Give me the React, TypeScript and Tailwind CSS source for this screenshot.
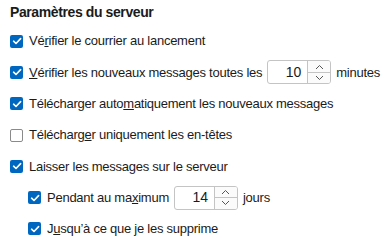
import type { ReactNode } from 'react'

function Check({ checked }: { checked: boolean }) {
  if (!checked) {
    return (
      <span className="w-[13px] h-[13px] shrink-0 rounded-[2px] border border-[#8a8a8a] bg-white box-border" />
    )
  }
  return (
    <span className="w-[13px] h-[13px] shrink-0 rounded-[2px] bg-[#0067c0] flex items-center justify-center">
      <svg width="10" height="10" viewBox="0 0 10 10" fill="none">
        <path d="M1.6 5.2 L4 7.5 L8.6 2.6" stroke="white" strokeWidth="1.6" strokeLinecap="round" strokeLinejoin="round" />
      </svg>
    </span>
  )
}

function Spinner({ value }: { value: number }) {
  return (
    <span className="flex h-[24px] w-[64px] rounded-[3px] border border-[#c4c4c4] bg-white box-border overflow-hidden">
      <span className="flex-1 flex items-center justify-end pr-[6px] text-[14px] tracking-normal">{value}</span>
      <span className="w-[23px] flex flex-col border-l border-[#c4c4c4] bg-[#fbfbfb]">
        <span className="flex-1 flex items-center justify-center border-b border-[#c4c4c4]">
          <svg width="9" height="6" viewBox="0 0 9 6" fill="none">
            <path d="M1 5 L4.5 1.5 L8 5" stroke="#555" strokeWidth="1" />
          </svg>
        </span>
        <span className="flex-1 flex items-center justify-center">
          <svg width="9" height="6" viewBox="0 0 9 6" fill="none">
            <path d="M1 1 L4.5 4.5 L8 1" stroke="#555" strokeWidth="1" />
          </svg>
        </span>
      </span>
    </span>
  )
}

function Row({ checked, indent, children }: { checked: boolean; indent?: boolean; children: ReactNode }) {
  return (
    <div className={`h-[31.3px] flex items-center gap-[6px] ${indent ? 'pl-[28px]' : 'pl-[10px]'}`}>
      <Check checked={checked} />
      <div className="flex items-center gap-[5px] whitespace-nowrap">{children}</div>
    </div>
  )
}

export default function App() {
  return (
    <div
      className="w-[386px] h-[240px] bg-white text-[#1b1b1b] overflow-hidden"
      style={{ fontFamily: '"Liberation Sans", Arial, sans-serif' }}
    >
      <div className="h-[25.5px] pl-[10px] flex items-center text-[14px] font-bold tracking-[-0.4px]">
        Paramètres du serveur
      </div>
      <div className="text-[13px] tracking-[-0.25px]">
        <Row checked>
          <span>
            Vé<u>r</u>ifier le courrier au lancement
          </span>
        </Row>
        <Row checked>
          <span>
            <u>V</u>érifier les nouveaux messages toutes les
          </span>
          <Spinner value={10} />
          <span>minutes</span>
        </Row>
        <Row checked>
          <span>
            Télécharger auto<u>m</u>atiquement les nouveaux messages
          </span>
        </Row>
        <Row checked={false}>
          <span>
            Télécharg<u>e</u>r uniquement les en-têtes
          </span>
        </Row>
        <Row checked>
          <span>Laisser les messages sur le serveur</span>
        </Row>
        <Row checked indent>
          <span>
            Pendant au ma<u>x</u>imum
          </span>
          <Spinner value={14} />
          <span>jours</span>
        </Row>
        <Row checked indent>
          <span>
            J<u>u</u>squ’à ce que je les supprime
          </span>
        </Row>
      </div>
    </div>
  )
}
